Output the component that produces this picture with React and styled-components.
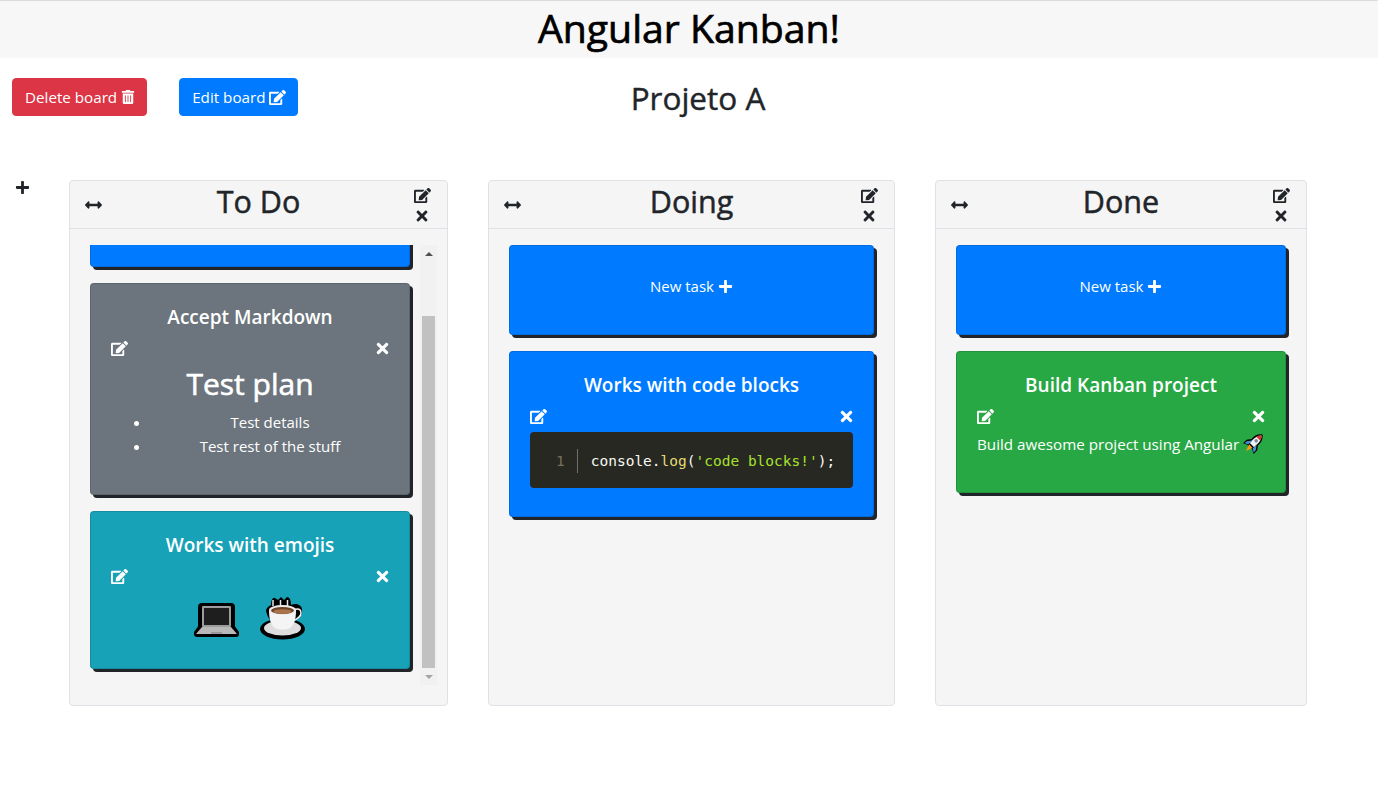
import React, { useLayoutEffect, useRef, useState } from 'react'
import styled, { createGlobalStyle } from 'styled-components'
import { FaArrowsAltH, FaEdit, FaPlus, FaTimes, FaTrashAlt } from 'react-icons/fa'

const GlobalStyle = createGlobalStyle`
  html, body {
    margin: 0;
    padding: 0;
    background: #fff;
    color: #212529;
    font-family: 'Open Sans', 'Liberation Sans', sans-serif;
    font-size: 15px;
    line-height: 24px;
  }
  * {
    box-sizing: border-box;
  }
`

const TopBar = styled.header`
  height: 58px;
  border-top: 1px solid #dcdcdc;
  background: #f7f7f7;
  text-align: center;
`

const PageTitle = styled.h1`
  margin: 0;
  font-size: 39.2px;
  font-weight: 400;
  line-height: 54px;
  color: #000;
  -webkit-text-stroke: 0.7px currentColor;
`

const Toolbar = styled.div`
  display: grid;
  grid-template-columns: 1fr auto 1fr;
  align-items: start;
  height: 38px;
  margin-top: 20px;
  padding-left: 12px;
`

const ToolbarButtons = styled.div`
  display: flex;
  gap: 32px;
`

const Button = styled.button`
  display: flex;
  align-items: center;
  gap: 4px;
  height: 38px;
  padding: 0 11px 0 12px;
  border: 1px solid ${(p) => p.$color};
  border-radius: 4px;
  background: ${(p) => p.$color};
  color: #fff;
  font: inherit;
  font-size: 15.2px;
`

const BoardName = styled.h2`
  margin: 0 0 0 6px;
  font-size: 31.5px;
  font-weight: 400;
  line-height: 40px;
  -webkit-text-stroke: 0.4px currentColor;
`

const Board = styled.main`
  display: flex;
  align-items: stretch;
  height: 526px;
  margin-top: 64px;
`

const AddColumn = styled.div`
  flex: 0 0 69px;
  padding-left: 15px;
  color: #212529;
  font-size: 15px;
  line-height: 16px;
`

const Columns = styled.div`
  display: flex;
  gap: 40px;
`

const ColumnBox = styled.section`
  display: flex;
  flex-direction: column;
  width: ${(p) => p.$width}px;
  border: 1px solid #dee2e6;
  border-radius: 4px;
  background: #f5f5f5;
`

const ColumnHeader = styled.div`
  display: grid;
  grid-template-columns: 32px 1fr 32px;
  align-items: center;
  height: 48px;
  border-bottom: 1px solid #dee2e6;
  text-align: center;
`

const ColumnTitle = styled.h3`
  margin: 0;
  padding-bottom: 8px;
  font-size: 30.5px;
  font-weight: 400;
  line-height: 40px;
  -webkit-text-stroke: 0.5px currentColor;
`

const MoveHandle = styled.div`
  display: flex;
  justify-content: center;
  padding-left: 15px;
  font-size: 18px;
`

const HeaderActions = styled.div`
  display: flex;
  flex-direction: column;
  align-items: center;
  gap: 4px;
  padding-right: 17px;
  font-size: 16px;
  line-height: 0;

  svg:last-child {
    margin-right: 2px;
  }
`

const ColumnBody = styled.div`
  display: flex;
  flex: 1;
  min-height: 0;
  padding: 16px 10px 20px 20px;
`

const Scroller = styled.div`
  flex: 1;
  min-width: 0;
  padding-right: 10px;
  overflow: hidden;
`

const ScrollRail = styled.div`
  display: flex;
  flex: 0 0 17px;
  flex-direction: column;
  background: #f1f1f1;
`

const ScrollButton = styled.div`
  display: flex;
  flex: 0 0 17px;
  align-items: center;
  justify-content: center;
`

const ScrollArrow = styled.span`
  width: 0;
  height: 0;
  border-right: 4px solid transparent;
  border-left: 4px solid transparent;
  border-top: ${(p) => (p.$down ? '4px solid #a3a3a3' : '0')};
  border-bottom: ${(p) => (p.$down ? '0' : '4px solid #505050')};
`

const ScrollTrack = styled.div`
  flex: 1;
  min-height: 0;
  padding: 0 2px;
`

const ScrollThumb = styled.div`
  background: #c1c1c1;
`

const Card = styled.article`
  min-height: ${(p) => (p.$tall ? '90px' : '0')};
  margin-bottom: 16px;
  padding: 20px;
  border: 1px solid rgba(0, 0, 0, 0.125);
  border-radius: 4px;
  background: ${(p) => p.$color};
  box-shadow: 3px 3px 0 #212529;
  color: #fff;
  text-align: center;
`

const NewTaskLabel = styled.div`
  display: flex;
  align-items: center;
  justify-content: center;
  gap: 4px;
  height: 40px;
`

const CardTitle = styled.h5`
  margin: 0 0 11px;
  padding-top: 1px;
  font-size: 19px;
  font-weight: 600;
  line-height: 24px;
`

const CardActions = styled.div`
  display: flex;
  align-items: flex-start;
  justify-content: space-between;
  height: 24px;
  margin-right: -2px;
  font-size: 17px;
  line-height: 0;
`

const Markdown = styled.div`
  text-align: ${(p) => (p.$left ? 'left' : 'center')};
`

const MarkdownHeading = styled.h1`
  margin: 0 0 7px;
  padding-top: 1px;
  font-size: 30px;
  font-weight: 400;
  line-height: 38px;
  -webkit-text-stroke: 0.6px currentColor;
`

const MarkdownList = styled.ul`
  margin: 0 0 16px;
  padding-left: 40px;
`

const Paragraph = styled.p`
  margin: 0 0 16px;
  font-size: 15.2px;
  white-space: nowrap;
`

const EmojiRow = styled.div`
  display: flex;
  justify-content: center;
  gap: 20px;
  height: 40px;
  margin-bottom: 16px;
`

const EmojiSvg = styled.svg`
  flex: none;
  margin-top: 4px;
`

const RocketSvg = styled.svg`
  margin-left: 4px;
  vertical-align: -4px;
`

const CodeBlock = styled.pre`
  display: flex;
  align-items: center;
  height: 56px;
  margin: 0 0 8px;
  padding: 2px 0 0 26px;
  border-radius: 4px;
  background: #272822;
  color: #f8f8f2;
  font-family: 'DejaVu Sans Mono', 'Liberation Mono', monospace;
  font-size: 14.5px;
  text-align: left;
`

const LineNumber = styled.span`
  padding-right: 12px;
  border-right: 1px solid #6f7068;
  color: #75715e;
  line-height: 24px;
`

const CodeLine = styled.code`
  padding-left: 13px;
  font: inherit;
`

const CodeFunction = styled.span`
  color: #e6db74;
`

const CodeString = styled.span`
  color: #a6e22e;
`

const Laptop = () => (
  <EmojiSvg width="46" height="46" viewBox="0 0 46 46" aria-label="laptop">
    <rect x="4" y="7" width="37" height="27" rx="4" fill="#000" />
    <path d="M5 29h35l5 7v2q0 3-3 3H3q-3 0-3-3v-2z" fill="#000" />
    <rect x="8" y="10" width="29" height="21" rx="1" fill="#9c9c9c" />
    <rect x="10" y="12" width="25" height="17" fill="#1e1e1e" />
    <path d="M8 31h29l6 7H2z" fill="#b8b8b8" />
    <rect x="17" y="36" width="11" height="2" fill="#999" />
  </EmojiSvg>
)

const Coffee = () => (
  <EmojiSvg width="46" height="46" viewBox="0 0 46 46" aria-label="hot beverage">
    <ellipse cx="22.500" cy="33" rx="22.500" ry="10.500" fill="#000" />
    <path d="M6 15c0-3 3-5 5-6 0-5 2-8 4-7l3 2 3-3 3 3 3-3c3 0 4 4 4 8 4-2 10-1 11 4 1 6-3 10-8 12-5 8-24 8-28-10z" fill="#000" />
    <ellipse cx="22.500" cy="32" rx="18.500" ry="7.500" fill="#dedede" />
    <path d="M34 14c4-2 7-1 7 3 0 4-4 6-8 8" fill="none" stroke="#f2f2f2" strokeWidth="1.500" />
    <path d="M9 14h27c0 10-2 15-6 18-4 2-11 2-15 0-4-3-6-8-6-18z" fill="#f4f4f4" />
    <ellipse cx="22.500" cy="14" rx="13.500" ry="5" fill="#ececec" />
    <ellipse cx="22.500" cy="14.500" rx="11.500" ry="3.500" fill="#6f4326" />
    <ellipse cx="22.500" cy="15.500" rx="9" ry="2.300" fill="#a9744a" />
    <path d="M13 10V4M20.500 10V4M27.500 10V4" stroke="#e8e8e8" strokeWidth="1.500" />
  </EmojiSvg>
)

const Rocket = () => (
  <RocketSvg width="20" height="20" viewBox="0 0 20 20" aria-label="rocket">
    <g transform="rotate(45 10 10)">
      <path d="M10 -3.500c4 3 5 7 4.500 11l3 4v5l-4-2h-7l-4 2v-5l3-4c-.5-4 .5-8 4.500-11z" fill="#000" />
      <path d="M10 -2c3 2.500 3.500 7 3 13.500H7C6.500 5 7 .5 10 -2z" fill="#eef2f5" />
      <path d="M10 -2c1.500 1.200 2.400 2.800 2.800 4.500H7.200C7.600 .8 8.500 -.8 10 -2z" fill="#d8322a" />
      <circle cx="10" cy="5.500" r="1.800" fill="#7f8c96" />
      <path d="M7 8l-3.500 4.500v3L7 13.500zM13 8l3.500 4.500v3L13 13.500z" fill="#3f8fd6" />
      <path d="M7.500 13h5l-2.500 7z" fill="#f39a1f" />
    </g>
  </RocketSvg>
)

const columns = [
  {
    title: 'To Do',
    width: 379,
    scrollTop: 68,
    tasks: [
      {
        id: 1,
        title: 'Accept Markdown',
        color: '#6c757d',
        body: (
          <Markdown>
            <MarkdownHeading>Test plan</MarkdownHeading>
            <MarkdownList>
              <li>Test details</li>
              <li>Test rest of the stuff</li>
            </MarkdownList>
          </Markdown>
        ),
      },
      {
        id: 2,
        title: 'Works with emojis',
        color: '#17a2b8',
        body: (
          <EmojiRow>
            <Laptop />
            <Coffee />
          </EmojiRow>
        ),
      },
    ],
  },
  {
    title: 'Doing',
    width: 407,
    tasks: [
      {
        id: 3,
        title: 'Works with code blocks',
        color: '#007bff',
        body: (
          <CodeBlock>
            <LineNumber>1</LineNumber>
            <CodeLine>
              console.<CodeFunction>log</CodeFunction>(<CodeString>'code blocks!'</CodeString>);
            </CodeLine>
          </CodeBlock>
        ),
      },
    ],
  },
  {
    title: 'Done',
    width: 372,
    tasks: [
      {
        id: 4,
        title: 'Build Kanban project',
        color: '#28a745',
        body: (
          <Markdown $left>
            <Paragraph>
              Build awesome project using Angular
              <Rocket />
            </Paragraph>
          </Markdown>
        ),
      },
    ],
  },
]

// the browser hides native scrollbars here, so the rail is drawn from the scroller's metrics
const ARROW_SIZE = 17

const Column = ({ title, width, tasks, scrollTop = 0 }) => {
  const scroller = useRef(null)
  const [thumb, setThumb] = useState(null)

  useLayoutEffect(() => {
    const el = scroller.current
    if (el.scrollHeight <= el.clientHeight) return
    el.scrollTop = scrollTop
    const track = el.clientHeight - ARROW_SIZE * 2
    setThumb({
      top: (el.scrollTop / el.scrollHeight) * track,
      height: (el.clientHeight / el.scrollHeight) * track,
    })
  }, [scrollTop])

  return (
    <ColumnBox $width={width}>
      <ColumnHeader>
        <MoveHandle>
          <FaArrowsAltH />
        </MoveHandle>
        <ColumnTitle>{title}</ColumnTitle>
        <HeaderActions>
          <FaEdit size={17} />
          <FaTimes />
        </HeaderActions>
      </ColumnHeader>
      <ColumnBody>
        <Scroller ref={scroller}>
          <Card $color="#007bff" $tall>
            <NewTaskLabel>
              New task <FaPlus size={15} />
            </NewTaskLabel>
          </Card>
          {tasks.map((task) => {
            return (
              <Card key={task.id} $color={task.color}>
                <CardTitle>{task.title}</CardTitle>
                <CardActions>
                  <FaEdit />
                  <FaTimes />
                </CardActions>
                {task.body}
              </Card>
            )
          })}
        </Scroller>
        {thumb && (
          <ScrollRail>
            <ScrollButton>
              <ScrollArrow />
            </ScrollButton>
            <ScrollTrack>
              <ScrollThumb style={{ marginTop: thumb.top, height: thumb.height }} />
            </ScrollTrack>
            <ScrollButton>
              <ScrollArrow $down />
            </ScrollButton>
          </ScrollRail>
        )}
      </ColumnBody>
    </ColumnBox>
  )
}

const App = () => {
  return (
    <>
      <GlobalStyle />
      <TopBar>
        <PageTitle>Angular Kanban!</PageTitle>
      </TopBar>
      <Toolbar>
        <ToolbarButtons>
          <Button $color="#dc3545">
            Delete board <FaTrashAlt size={14} />
          </Button>
          <Button $color="#007bff">
            Edit board <FaEdit size={17} />
          </Button>
        </ToolbarButtons>
        <BoardName>Projeto A</BoardName>
      </Toolbar>
      <Board>
        <AddColumn>
          <FaPlus />
        </AddColumn>
        <Columns>
          {columns.map((column) => {
            return <Column key={column.title} {...column} />
          })}
        </Columns>
      </Board>
    </>
  )
}

export default App
